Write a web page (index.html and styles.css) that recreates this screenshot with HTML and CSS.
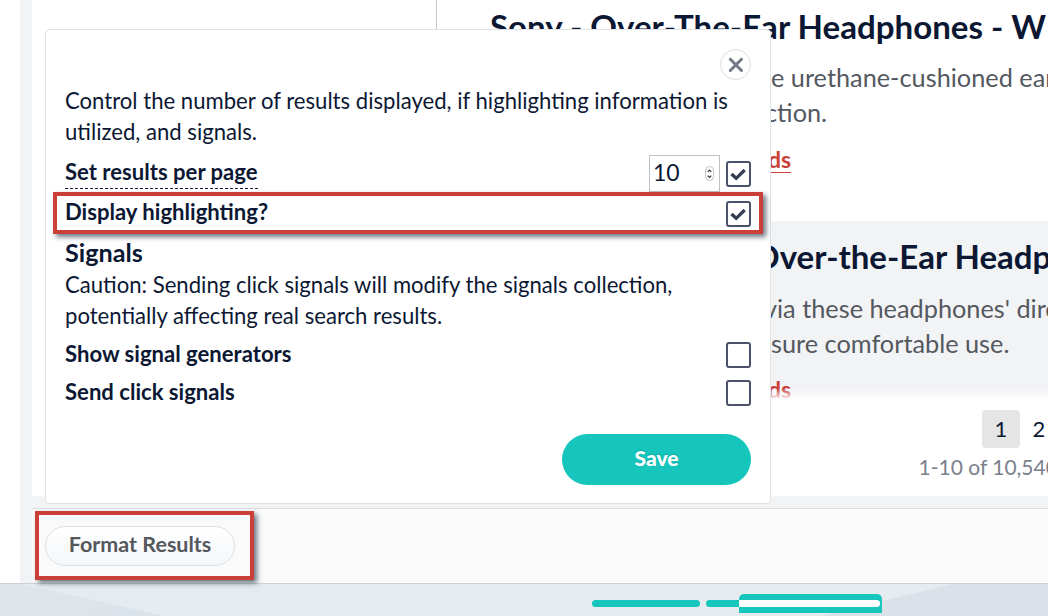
FILE: index.html
```html
<!DOCTYPE html>
<html lang="en">
<head>
<meta charset="utf-8">
<title>Format Results</title>
<link rel="stylesheet" href="styles.css">
</head>
<body>
<div class="screen">
  <div class="app">
    <div class="gutter"></div>
    <main class="panel">
      <section class="content">
        <div class="facets"></div>
        <div class="results">
          <div class="result-list">
            <article class="result">
              <h2 class="result-title">Sony - Over-The-Ear Headphones - W</h2>
              <p class="result-text first-line">e urethane-cushioned ear</p>
              <p class="result-text second-line">ction.</p>
              <a class="fields-link">ds</a>
            </article>
            <article class="result shaded">
              <h2 class="result-title">Over-the-Ear Headp</h2>
              <p class="result-text first-line">via these headphones' dire</p>
              <p class="result-text second-line">sure comfortable use.</p>
              <a class="fields-link">ds</a>
            </article>
            <div class="fade"></div>
          </div>
          <div class="pager"><span class="page current">1</span><span class="page">2</span></div>
          <div class="range">1-10 of 10,540</div>
        </div>
      </section>
      <footer class="toolbar"><button class="format-button">Format Results</button></footer>
    </main>
  </div>
  <div class="backdrop">
    <svg class="scenery" width="1048" height="32" viewBox="0 0 1048 32">
      <defs>
        <linearGradient id="hill"><stop offset="0" stop-color="#e0e5e9"/><stop offset="1" stop-color="#dae3eb"/></linearGradient>
      </defs>
      <path d="M0 0H22L164 32H0Z" fill="url(#hill)"/>
      <path d="M820 32L953 0H1048V32Z" fill="#dbe1e8"/>
      <rect x="592" y="16" width="108" height="7" rx="3.5" fill="#16c5bc"/>
      <path d="M739 16H709.5a3.500 3.500 0 0 0 0 7H739Z" fill="#16c5bc"/>
      <path d="M739 29V15a5 5 0 0 1 5-5H877a5 5 0 0 1 5 5V29Z" fill="#16c5bc"/>
      <path d="M739 16H876.500a3.500 3.500 0 0 1 0 7H739Z" fill="#fff"/>
    </svg>
  </div>

  <div class="dialog">
    <button class="close" aria-label="Close"><svg width="29" height="29" viewBox="0 0 29 29"><path d="M9.300 9.300L20.500 20.500M20.500 9.300L9.300 20.500" stroke="#737986" stroke-width="3" stroke-linecap="round"/></svg></button>
    <p class="copy">Control the number of results displayed, if highlighting information is<br>utilized, and signals.</p>
    <div class="row per-page">
      <span class="label dashed">Set results per page</span>
      <span class="number">10<svg class="stepper" width="10" height="16" viewBox="0 0 10 16"><rect x=".5" y=".5" width="8" height="14" rx="4" fill="#fff" stroke="#bfc3c8"/><path d="M2.700 5.800L4.500 4L6.300 5.800M2.700 9.600L4.500 11.400L6.300 9.600" fill="none" stroke="#333" stroke-width="1.200"/></svg></span>
      <span class="check"><svg width="21" height="22" viewBox="2 2 21 22"><path d="M5.500 13L10.200 17.300L18.700 9" fill="none" stroke="#343c52" stroke-width="3.200"/></svg></span>
    </div>
    <div class="row highlight">
      <span class="label">Display highlighting?</span>
      <span class="check"><svg width="21" height="22" viewBox="2 2 21 22"><path d="M5.500 13L10.200 17.300L18.700 9" fill="none" stroke="#343c52" stroke-width="3.200"/></svg></span>
    </div>
    <h3 class="heading">Signals</h3>
    <p class="copy">Caution: Sending click signals will modify the signals collection,<br>potentially affecting real search results.</p>
    <div class="row generators"><span class="label">Show signal generators</span><span class="check"></span></div>
    <div class="row clicks"><span class="label">Send click signals</span><span class="check"></span></div>
    <button class="save">Save</button>
  </div>
  <div class="callout highlight-callout"></div>
  <div class="callout format-callout"></div>
</div>
</body>
</html>
```
FILE: styles.css
```css
* { box-sizing: border-box; }
body { margin: 0; background: #fff; color: #0c1833; font-family: Lato, sans-serif; }
h2, h3, p { margin: 0; }
button { font-family: inherit; padding: 0; }

.screen { position: relative; width: 1048px; height: 616px; overflow: hidden; display: flex; flex-direction: column; }
.app { height: 583px; display: flex; padding-left: 20px; }
.gutter { width: 12px; flex: none; background: #f2f3f5; }
.panel { flex: 1; min-width: 0; display: flex; flex-direction: column; background: #f2f3f5; }
.content { height: 496px; display: flex; background: #fff; }
.facets { width: 405px; flex: none; border-right: 1px solid #c5c7cc; }
.results { flex: 1; min-width: 0; display: flex; flex-direction: column; }
.result-list { position: relative; height: 400px; overflow: hidden; display: flex; flex-direction: column; }
.result { height: 221px; flex: none; padding: 5px 0 0 53px; white-space: nowrap; display: flex; flex-direction: column; align-items: flex-start; overflow: hidden; }
.result.shaded { background: #f2f3f5; padding-top: 14px; }
.result-title { font-size: 33.100px; line-height: 42px; font-weight: 700; }
.shaded .result-title { margin-left: 263px; font-size: 33px; }
.result-text { color: #54585f; font-size: 25.300px; line-height: 35px; }
.first-line { margin: 13px 0 0 281px; }
.second-line { margin-left: 275px; }
.shaded .first-line { margin: 14px 0 0 274px; }
.shaded .second-line { margin-left: 281px; }
.fields-link { margin: 17px 0 0 278px; font-size: 23px; line-height: 25px; color: #cb3f39; border-bottom: 1px solid #cb3f39; font-weight: 700; }
.shaded .fields-link { margin-top: 16px; }
.fade { position: absolute; left: 0; right: 0; bottom: 0; height: 12px; background: linear-gradient(#fff0, #fff); }
.pager { display: flex; margin: 10px 0 0 545px; }
.page { width: 38px; height: 38px; flex: none; font-size: 22px; line-height: 37px; text-align: center; }
.current { background: #e5e5e5; border-radius: 4px; }
.range { margin: 4px 0 0 481.500px; color: #7b808d; font-size: 21px; line-height: 30px; white-space: nowrap; }
.toolbar { margin-top: 12px; height: 75px; border-top: 1px solid #d9dbde; background: #fafafa; padding: 17px 13px; }
.format-button { width: 190px; height: 40px; border: 1px solid #d9e0e6; border-radius: 20px; background: linear-gradient(#fff, #f4f6f9); color: #54585d; font-size: 21.500px; font-weight: 700; line-height: 34px; padding-bottom: 4px; }
.backdrop { height: 33px; border-top: 1px solid #cbd1d6; background: #e6ebef; }
.scenery { display: block; }

.dialog { position: absolute; left: 45px; top: 29px; width: 726px; height: 475px; padding: 19px 19px 18px; border: 1px solid #e0e2e5; border-radius: 4px; background: #fff; display: flex; flex-direction: column; }
.close { width: 31px; height: 31px; flex: none; align-self: flex-end; border: 1px solid #dcdee0; border-radius: 50%; background: #fff; display: grid; place-items: center; }
.copy { font-size: 22.120px; line-height: 31px; white-space: nowrap; margin-top: 5px; }
.row { display: flex; align-items: flex-start; flex: none; }
.label { font-size: 22.100px; line-height: 30px; font-weight: 700; }
.check { width: 25px; height: 26px; flex: none; border: 2px solid #4a5168; border-radius: 3px; margin-left: auto; display: grid; place-items: center; }
.per-page { height: 37px; margin-top: 7px; }
.per-page .label { margin-top: 3px; }
.per-page .dashed { border-bottom: 1px dashed #0c1833; line-height: 31px; padding-bottom: 1px; margin-top: 2px; }
.number { width: 71px; height: 37px; flex: none; border: 1px solid #bfc1c4; margin: 1px 0 0 auto; padding: 0 4px 0 3px; font-size: 23px; line-height: 33px; display: flex; justify-content: space-between; align-items: flex-start; }
.stepper { margin-top: 10px; }
.per-page .check { margin: 7px 0 0 6px; }
.highlight { height: 44px; padding-top: 6px; }
.highlight .check { margin-top: 4px; }
.heading { font-size: 25.200px; line-height: 35px; flex: none; }
.heading + .copy { margin-top: -1px; }
.generators { height: 38px; margin-top: 8px; }
.generators .check, .clicks .check { margin-top: 3px; }
.clicks { height: 38px; }
.save { width: 189px; height: 51px; margin-top: auto; flex: none; align-self: flex-end; border: 0; border-radius: 26px; background: #16c5bc; color: #fff; font-size: 21px; font-weight: 900; padding-bottom: 5px; text-shadow: 0 -1px 1px #0c9d9699; }

.callout { position: absolute; border: 4px solid #cb3f39; box-shadow: 3px 3px 5px #243648aa; pointer-events: none; }
.highlight-callout { left: 53px; top: 192px; width: 710px; height: 42px; }
.format-callout { left: 35px; top: 511px; width: 219px; height: 69px; }
```
